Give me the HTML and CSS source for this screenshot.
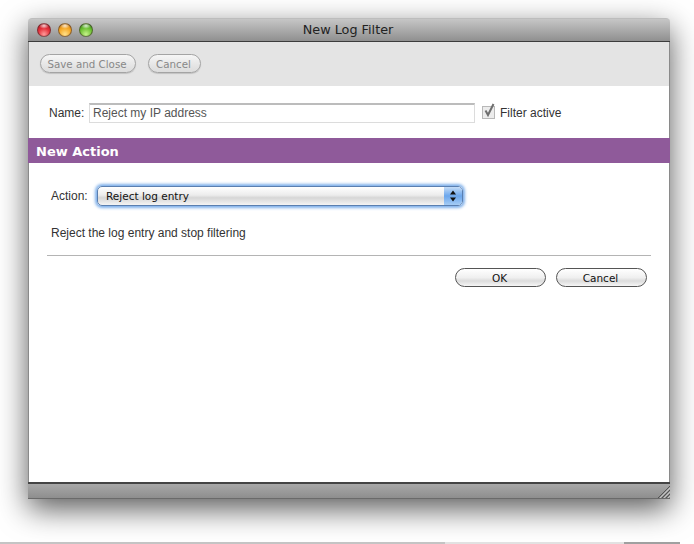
FILE: index.html
```html
<!DOCTYPE html>
<html lang="en">
<head>
  <meta charset="UTF-8">
  <title>New Log Filter</title>
  <link rel="stylesheet" href="styles.css">
</head>
<body>
  <div class="window">
    <div class="titlebar">
      <div class="lights">
        <span class="light red"></span>
        <span class="light orange"></span>
        <span class="light green"></span>
      </div>
      <div class="title">New Log Filter</div>
    </div>
    <div class="toolbar">
      <button class="tool-btn save-btn">Save and Close</button>
      <button class="tool-btn cancel-tool-btn">Cancel</button>
    </div>
    <div class="name-row">
      <label class="name-label">Name:</label>
      <div class="name-input">Reject my IP address</div>
      <span class="check">
        <svg width="16" height="17" viewBox="0 0 16 17">
          <rect x="0.5" y="3.5" width="12" height="12" fill="#ececec" stroke="#b8b8b8"/>
          <path d="M3.5 7.5 L6 12 L11.5 1" fill="none" stroke="#6e6e6e" stroke-width="2"/>
        </svg>
      </span>
      <span class="check-label">Filter active</span>
    </div>
    <div class="section-bar">New Action</div>
    <div class="content">
      <div class="action-row">
        <label class="action-label">Action:</label>
        <div class="select">
          <span class="select-text">Reject log entry</span>
          <span class="select-arrows">
            <svg width="8" height="12" viewBox="0 0 8 12">
              <path d="M4 0.5 L7 4.5 L1 4.5 Z M4 11.5 L7 7.5 L1 7.5 Z" fill="#111"/>
            </svg>
          </span>
        </div>
      </div>
      <p class="desc">Reject the log entry and stop filtering</p>
      <div class="divider"></div>
      <div class="buttons">
        <button class="btn ok-btn">OK</button>
        <button class="btn">Cancel</button>
      </div>
    </div>
    <div class="statusbar">
      <svg class="grip" width="12" height="12" viewBox="0 0 12 12">
        <path d="M0 12 L12 0 M4 12 L12 4 M8 12 L12 8" stroke="#555" stroke-width="1" fill="none"/>
        <path d="M2 12 L12 2 M6 12 L12 6 M10 12 L12 10" stroke="#c4c4c4" stroke-width="1" fill="none"/>
      </svg>
    </div>
  </div>
  <div class="desk-line">
    <span class="line-a"></span>
    <span class="line-b"></span>
    <span class="line-c"></span>
  </div>
</body>
</html>
```

FILE: styles.css
```css
* {
  margin: 0;
  padding: 0;
  box-sizing: border-box;
}
html, body {
  width: 694px;
  height: 544px;
  overflow: hidden;
}
body {
  background: #fff;
  padding: 18px 24px 0 28px;
  font-family: "Liberation Sans", sans-serif;
  font-size: 12px;
  color: #333;
  position: relative;
}
.window {
  width: 642px;
  height: 481px;
  display: flex;
  flex-direction: column;
  background: #fff;
  border-radius: 4px 4px 0 0;
  box-shadow: 0 10px 30px rgba(0, 0, 0, 0.65);
}
/* Title bar */
.titlebar {
  height: 24px;
  flex: none;
  display: flex;
  align-items: center;
  position: relative;
  background: linear-gradient(#c6c6c6, #8f8f8f);
  border-top: 1px solid #bdbdbd;
  border-bottom: 1px solid #3c3c3c;
  border-radius: 4px 4px 0 0;
}
.lights {
  display: flex;
  gap: 7px;
  padding-left: 9px;
}
.light {
  width: 14px;
  height: 14px;
  border-radius: 50%;
  border: 1px solid rgba(60, 40, 40, 0.55);
}
.red {
  background: radial-gradient(ellipse 5px 3px at 50% 15%, rgba(255, 255, 255, 0.8), transparent), radial-gradient(circle at 50% 85%, #ff9a9a, #e5323c 50%, #a80f1c);
}
.orange {
  background: radial-gradient(ellipse 5px 3px at 50% 15%, rgba(255, 255, 255, 0.8), transparent), radial-gradient(circle at 50% 85%, #ffe08a, #f5a623 55%, #b56a0c);
}
.green {
  background: radial-gradient(ellipse 5px 3px at 50% 15%, rgba(255, 255, 255, 0.8), transparent), radial-gradient(circle at 50% 85%, #c6f28a, #6abf30 55%, #2f7d12);
}
.title {
  position: absolute;
  left: -2px;
  right: 0;
  text-align: center;
  font-family: "DejaVu Sans", sans-serif;
  font-size: 12.8px;
  color: #222;
  top: 3px;
}
/* Toolbar */
.toolbar {
  height: 44px;
  flex: none;
  background: #e4e4e4;
  display: flex;
  align-items: center;
  gap: 12px;
  padding: 0 0 1px 11px;
  border-left: 1px solid #8a8a8a;
  border-right: 1px solid #8a8a8a;
}
.tool-btn {
  height: 19px;
  padding-right: 2px;
  border: 1px solid #a4a4a4;
  border-radius: 10px;
  background: linear-gradient(#f6f6f6, #e8e8e8 50%, #dcdcdc);
  font-family: "DejaVu Sans", sans-serif;
  font-size: 10.3px;
  color: #888;
  box-shadow: 0 1px 1px rgba(0, 0, 0, 0.15);
}
.save-btn {
  width: 96px;
}
.cancel-tool-btn {
  width: 53px;
}
.name-row {
  height: 52px;
  flex: none;
  display: flex;
  align-items: center;
  padding-left: 20px;
  padding-top: 2px;
  border-left: 1px solid #8a8a8a;
  border-right: 1px solid #8a8a8a;
}
.name-label {
  width: 40px;
}
.name-input {
  width: 386px;
  height: 20px;
  border: 1px solid #dcdcdc;
  border-top: 2px solid #bcbcbc;
  padding: 0 3px;
  line-height: 17px;
  color: #555;
}
.check {
  margin-left: 7px;
  margin-top: -3px;
  height: 17px;
  width: 18px;
}
.check-label {
  margin-left: 0;
}
/* Purple bar */
.section-bar {
  height: 25px;
  flex: none;
  background: #8f5a9a;
  color: #fff;
  font-family: "DejaVu Sans", sans-serif;
  font-weight: bold;
  font-size: 13px;
  line-height: 27px;
  padding-left: 8px;
}
.content {
  flex: 1;
  padding-left: 18px;
  padding-right: 18px;
  border-left: 1px solid #8a8a8a;
  border-right: 1px solid #8a8a8a;
}
.action-row {
  display: flex;
  align-items: center;
  height: 20px;
  margin-top: 23px;
  padding-left: 4px;
}
.action-label {
  width: 46px;
}
.select {
  width: 366px;
  height: 20px;
  display: flex;
  align-items: center;
  justify-content: space-between;
  border: 1px solid #5a7fb0;
  border-radius: 5px;
  background: linear-gradient(#fff, #ececec 45%, #d6d6d6 60%, #f4f4f4);
  box-shadow: 0 0 3px 2px #7fb0ea;
  overflow: hidden;
}
.select-text {
  padding-left: 8px;
  font-family: "DejaVu Sans", sans-serif;
  font-size: 10.5px;
  color: #111;
}
.select-arrows {
  width: 18px;
  height: 18px;
  display: flex;
  align-items: center;
  justify-content: center;
  background: linear-gradient(#c4dcf7, #6ba6ec 50%, #a5ccf5);
}
.desc {
  margin-top: 20px;
  padding-left: 4px;
  height: 15px;
  line-height: 15px;
}
.divider {
  margin-top: 14px;
  height: 1px;
  background: #b4b4b4;
}
.buttons {
  display: flex;
  justify-content: flex-end;
  gap: 10px;
  margin-top: 12px;
  padding-right: 4px;
}
.btn {
  width: 91px;
  height: 19px;
  padding-right: 2px;
  border: 1px solid #555;
  border-radius: 10px;
  background: linear-gradient(#fff, #f0f0f0 50%, #dcdcdc 70%, #f6f6f6);
  font-family: "DejaVu Sans", sans-serif;
  font-size: 10.5px;
  color: #111;
}
/* Status bar */
.statusbar {
  height: 17px;
  flex: none;
  position: relative;
  background: linear-gradient(#a8a8a8, #8e8e8e);
  border-top: 2px solid #444;
  border-bottom: 1px solid #6a6a6a;
}
.grip {
  position: absolute;
  right: 0;
  bottom: 0;
}
.desk-line {
  position: absolute;
  left: 0;
  right: 0;
  bottom: 0;
  height: 2px;
  display: flex;
}
.line-a {
  width: 445px;
  background: #c4c4c4;
}
.line-b {
  width: 179px;
  background: #e2e2e2;
}
.line-c {
  width: 56px;
  background: #a0a0a0;
}
```
